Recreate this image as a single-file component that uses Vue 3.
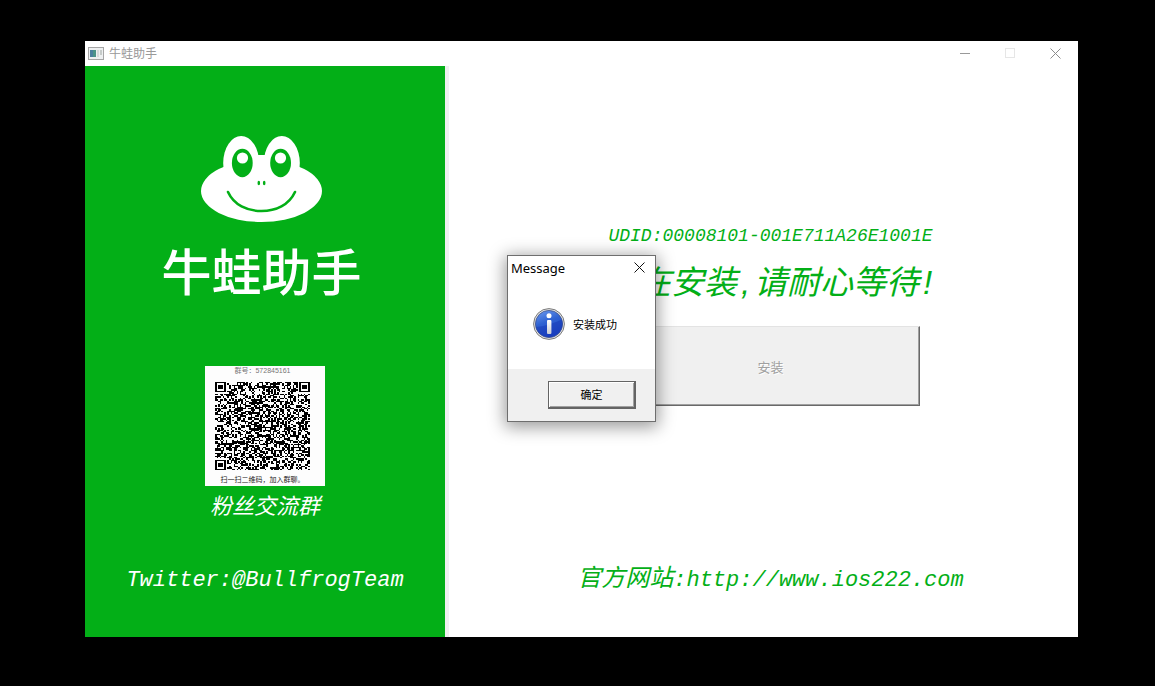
<script setup>
const SIZE = 61

function finderCell(x, y) {
  const edge = Math.max(Math.abs(x - 3), Math.abs(y - 3))
  return edge === 3 || edge <= 1
}

function buildCode() {
  let seed = 52845161
  const next = () => {
    seed = (seed * 1103515245 + 12345) % 2147483648
    return seed / 2147483648
  }
  let path = ''
  for (let y = 0; y < SIZE; y++) {
    for (let x = 0; x < SIZE; x++) {
      const random = next() < 0.5
      let on = random
      const fx = x < 8 ? x : x >= SIZE - 8 ? SIZE - 1 - x : -1
      const fy = y < 8 ? y : y >= SIZE - 8 ? SIZE - 1 - y : -1
      const isFinder = fx >= 0 && fy >= 0 && !(x >= SIZE - 8 && y >= SIZE - 8)
      if (isFinder) on = fx < 7 && fy < 7 && finderCell(fx, fy)
      if (on) path += `M${x} ${y}h1v1h-1z`
    }
  }
  return path
}

const codePath = buildCode()
</script>

<template>
  <div class="desktop">
    <main class="window">
      <header class="titlebar">
        <svg class="app-icon" width="16" height="14" viewBox="0 0 16 14" aria-hidden="true">
          <rect x="0.5" y="0.5" width="15" height="12" fill="#eef0f1" stroke="#a5a5a5" />
          <rect x="2" y="3" width="6" height="7" fill="#4b9388" />
          <path d="M2 3h3v7h-3z" fill="#4a7f9e" />
          <rect x="9" y="3" width="2" height="7" fill="#d5d8da" />
          <rect x="12" y="3" width="2" height="5" fill="#c6cbc9" />
        </svg>
        <h1 class="title">牛蛙助手</h1>
        <div class="controls">
          <button type="button" aria-label="最小化">
            <svg width="11" height="11" viewBox="0 0 11 11"><path d="M0 5.5h10" stroke="#999" /></svg>
          </button>
          <button type="button" aria-label="最大化" disabled>
            <svg width="11" height="11" viewBox="0 0 11 11"><rect x="0.5" y="0.5" width="9" height="9" fill="none" stroke="#e6e6e6" /></svg>
          </button>
          <button type="button" aria-label="关闭">
            <svg width="11" height="11" viewBox="0 0 11 11"><path d="M0.5 0.5l10 10M10.5 0.5l-10 10" stroke="#8c8c8c" /></svg>
          </button>
        </div>
      </header>

      <div class="body">
        <aside class="side">
          <div class="brand">
            <svg class="frog" width="121" height="86" viewBox="0 0 121 86" aria-hidden="true">
              <g fill="#fff">
                <ellipse cx="60.5" cy="55" rx="60.5" ry="31" />
                <ellipse cx="40.2" cy="27" rx="18" ry="27" />
                <ellipse cx="80.8" cy="27" rx="18" ry="27" />
                <rect x="54" y="19" width="13" height="20" />
              </g>
              <g fill="#03af17">
                <ellipse cx="41.3" cy="27" rx="10.4" ry="14.2" />
                <ellipse cx="79.6" cy="27" rx="10.4" ry="14.2" />
                <ellipse cx="57.8" cy="47" rx="1.3" ry="2.2" />
                <ellipse cx="63.2" cy="47" rx="1.3" ry="2.2" />
              </g>
              <circle cx="41.5" cy="22" r="5.6" fill="#fff" />
              <circle cx="79.5" cy="22" r="5.6" fill="#fff" />
              <path d="M27 56C33 69 46 75 60.5 75S88 69 94 56" fill="none" stroke="#03af17" stroke-width="2.6" stroke-linecap="round" />
            </svg>
            <p class="brand-name">牛蛙助手</p>
          </div>

          <figure class="group">
            <div class="card">
              <span class="card-number">群号：572845161</span>
              <svg class="code" :viewBox="`0 0 ${SIZE} ${SIZE}`" width="95" height="88" preserveAspectRatio="none" role="img" aria-label="QR">
                <path :d="codePath" fill="#000" />
              </svg>
              <span class="card-hint">扫一扫二维码，加入群聊。</span>
            </div>
            <figcaption>粉丝交流群</figcaption>
          </figure>

          <p class="contact">Twitter:@BullfrogTeam</p>
        </aside>

        <section class="content">
          <p class="udid">UDID:00008101-001E711A26E1001E</p>
          <p class="status">正在安装<span class="half">,</span>请耐心等待<span class="half">!</span></p>
          <button class="install" type="button" disabled>安装</button>
          <p class="contact site"><span class="han">官方网站</span>:http://www.ios222.com</p>
        </section>
      </div>

      <div class="dialog" role="dialog" aria-labelledby="dialog-title">
        <div class="dialog-head">
          <h2 id="dialog-title">Message</h2>
          <button type="button" aria-label="关闭">
            <svg width="11" height="11" viewBox="0 0 11 11"><path d="M0.5 0.5l10 10M10.5 0.5l-10 10" stroke="#111" /></svg>
          </button>
        </div>
        <div class="dialog-main">
          <svg width="32" height="32" viewBox="0 0 32 32" aria-hidden="true">
            <defs>
              <linearGradient id="ball" x1="0" y1="0" x2="0.4" y2="1">
                <stop offset="0" stop-color="#6f9df0" />
                <stop offset="0.5" stop-color="#2f62d2" />
                <stop offset="1" stop-color="#1d45c8" />
              </linearGradient>
              <linearGradient id="stem" x1="0" y1="0" x2="0" y2="1">
                <stop offset="0" stop-color="#fff" />
                <stop offset="1" stop-color="#c9ccd2" />
              </linearGradient>
            </defs>
            <circle cx="16" cy="16" r="15.4" fill="#e6e6e6" stroke="#7b7b7b" />
            <circle cx="16" cy="16" r="13.6" fill="url(#ball)" stroke="#3c4f86" stroke-width="0.8" />
            <path d="M2.8 19Q15 18 29 11.5A13.4 13.4 0 1 1 2.8 19z" fill="#1638b4" opacity="0.5" />
            <circle cx="16" cy="7.8" r="2.5" fill="#fff" />
            <rect x="14" y="12" width="4.4" height="14" rx="1" fill="url(#stem)" />
          </svg>
          <span>安装成功</span>
        </div>
        <div class="dialog-foot">
          <button class="ok" type="button">确定</button>
        </div>
      </div>
    </main>
  </div>
</template>

<style>
body {
  margin: 0;
  background: #000;
}
</style>

<style scoped>
.desktop {
  box-sizing: border-box;
  min-height: 100vh;
  padding: 41px 77px 49px 85px;
  display: flex;
  background: #000;
  font-family: "Liberation Sans", "Noto Sans CJK SC", sans-serif;
}

h1, h2, p, figure {
  margin: 0;
  font-weight: 400;
}

button {
  padding: 0;
  font-family: inherit;
}

.window {
  position: relative;
  flex: 1;
  display: flex;
  flex-direction: column;
  background: #fff;
}

.titlebar {
  display: flex;
  align-items: center;
  height: 25px;
  padding-left: 3px;
}

.title {
  margin-left: 5px;
  flex: 1;
  font-size: 12px;
  line-height: 24px;
  color: #999;
}

.controls {
  display: flex;
}

.controls button {
  width: 45px;
  height: 25px;
  border: 0;
  background: none;
  display: grid;
  place-items: center;
}

.body {
  flex: 1;
  display: flex;
}

.side {
  box-sizing: border-box;
  width: 360px;
  padding-bottom: 38px;
  display: flex;
  flex-direction: column;
  align-items: center;
  background: #03af17;
  color: #fff;
}

.brand {
  margin-top: 70px;
  padding-right: 7px;
  display: flex;
  flex-direction: column;
  align-items: center;
}

.frog {
  display: block;
}

.brand-name {
  margin-top: 22px;
  font-size: 50px;
  line-height: 60px;
  font-weight: 500;
}

.group {
  margin-top: 62px;
}

.card {
  box-sizing: border-box;
  width: 120px;
  height: 120px;
  padding-right: 5px;
  display: flex;
  flex-direction: column;
  align-items: center;
  background: #fdfdfd;
  color: #222;
}

.card-number {
  font-size: 7px;
  line-height: 10px;
  color: #777;
  margin-bottom: 6px;
}

.code {
  display: block;
  shape-rendering: crispEdges;
}

.card-hint {
  margin-top: 5px;
  font-size: 7px;
  line-height: 10px;
}

.group figcaption {
  margin-top: 5px;
  font-size: 22px;
  line-height: 32px;
  font-style: italic;
  text-align: center;
}

.contact {
  margin-top: auto;
  font-family: "Liberation Mono", "Noto Sans CJK SC", monospace;
  font-size: 22px;
  line-height: 36px;
  font-style: italic;
  white-space: nowrap;
}

.han {
  font-size: 24px;
}

.content {
  flex: 1;
  box-sizing: border-box;
  padding: 157px 0 38px 14px;
  border-left: 4px solid #f0f0f0;
  display: flex;
  flex-direction: column;
  align-items: center;
  color: #03af17;
}

.udid {
  font-family: "Liberation Mono", monospace;
  font-size: 18px;
  line-height: 26px;
  font-style: italic;
}

.status {
  margin-top: 12px;
  font-size: 33px;
  line-height: 44px;
  font-style: italic;
  white-space: nowrap;
}

.half {
  display: inline-block;
  width: 17px;
  text-align: center;
}

.install {
  margin-top: 21px;
  width: 298px;
  height: 80px;
  border: 1px solid #e3e3e3;
  border-right-color: #696969;
  border-bottom-color: #696969;
  background: #f0f0f0;
  box-shadow: inset -1px -1px 0 #a0a0a0;
  color: #a0a0a0;
  font-size: 13px;
  text-shadow: 1px 1px 0 #fff;
}

.dialog {
  position: absolute;
  inset: 0 0 2px;
  margin: auto;
  box-sizing: border-box;
  width: 149px;
  height: 167px;
  display: flex;
  flex-direction: column;
  background: #fff;
  border: 1px solid #6e6e6e;
  box-shadow: 0 3px 16px 2px rgba(0, 0, 0, 0.4);
  color: #000;
}

.dialog-head {
  display: flex;
  align-items: center;
  justify-content: space-between;
  height: 24px;
  padding: 0 10px 0 3px;
}

.dialog-head h2 {
  font-family: "Noto Sans", sans-serif;
  font-size: 13px;
}

.dialog-head button {
  border: 0;
  background: none;
  display: grid;
}

.dialog-main {
  flex: 1;
  display: flex;
  align-items: center;
  gap: 8px;
  padding-left: 25px;
  font-size: 11px;
}

.dialog-foot {
  display: flex;
  justify-content: flex-end;
  padding: 12px 19px 12px;
  background: #f0f0f0;
}

.ok {
  width: 88px;
  height: 28px;
  border: 1px solid #646464;
  border-right-width: 2px;
  border-bottom-width: 2px;
  background: #f0f0f0;
  box-shadow: inset 1px 1px 0 #fff, inset -1px -1px 0 #a0a0a0;
  color: #000;
  font-size: 11px;
}
</style>
